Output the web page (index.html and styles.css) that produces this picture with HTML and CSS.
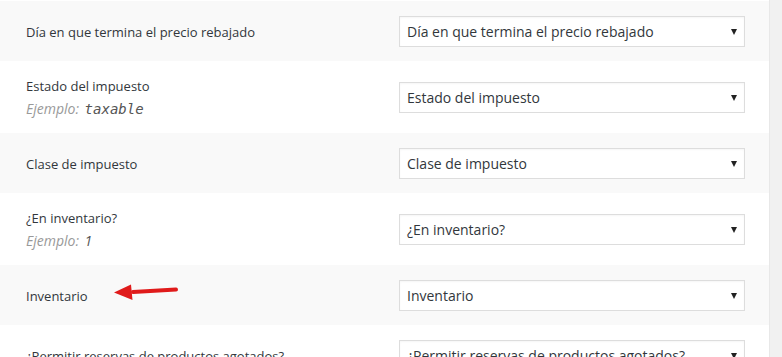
FILE: index.html
```html
<!DOCTYPE html>
<html lang="es">
<head>
    <meta charset="UTF-8">
    <meta name="viewport" content="width=device-width, initial-scale=1.0">
    <title>Importar productos - Campos</title>
    <link rel="stylesheet" href="styles.css">
</head>
<body>
    <div class="screen">
        <div class="fields">
            <div class="row alt">
                <div class="label">Día en que termina el precio rebajado</div>
                <div class="field"><div class="select">Día en que termina el precio rebajado<span class="caret"></span></div></div>
            </div>
            <div class="row">
                <div class="label">
                    Estado del impuesto
                    <div class="example">Ejemplo: <code>taxable</code></div>
                </div>
                <div class="field"><div class="select">Estado del impuesto<span class="caret"></span></div></div>
            </div>
            <div class="row alt">
                <div class="label">Clase de impuesto</div>
                <div class="field"><div class="select">Clase de impuesto<span class="caret"></span></div></div>
            </div>
            <div class="row">
                <div class="label">
                    ¿En inventario?
                    <div class="example">Ejemplo: <code class="num">1</code></div>
                </div>
                <div class="field"><div class="select">¿En inventario?<span class="caret"></span></div></div>
            </div>
            <div class="row alt">
                <div class="label">Inventario</div>
                <div class="field"><div class="select">Inventario<span class="caret"></span></div></div>
                <!-- annotation arrow -->
                <svg class="arrow" width="70" height="24" viewBox="0 0 70 24">
                    <path d="M63 6.5 L20 9" stroke="#e01b1b" stroke-width="4" stroke-linecap="round" fill="none"/>
                    <polygon points="1,9.5 18,1.5 19.5,17" fill="#e01b1b"/>
                </svg>
            </div>
            <div class="row">
                <div class="label">¿Permitir reservas de productos agotados?</div>
                <div class="field"><div class="select">¿Permitir reservas de productos agotados?<span class="caret"></span></div></div>
            </div>
        </div>
        <div class="scroll"></div>
    </div>
</body>
</html>
```
FILE: styles.css
```css
body {
    margin: 0;
    font-family: "Open Sans", "Noto Sans", sans-serif;
    color: #32373c;
    background-color: #f1f1f1;
}
.screen {
    display: flex;
    height: 357px;
    overflow: hidden;
}
.fields {
    width: 769px;
    padding-top: 1px;
    background-color: #ffffff;
}
.scroll {
    flex: 1;
    background-color: #f1f1f1;
    border-left: 1px solid #e8e8e8;
}
.row {
    position: relative;
    display: grid;
    grid-template-columns: 399px 346px;
    align-items: center;
    padding: 15px 0 14px;
}
.row.alt {
    background-color: #f9f9f9;
}
.label {
    padding-left: 26px;
    font-size: 13px;
    line-height: 20px;
}
.example {
    margin-top: 3px;
    color: #999999;
    font-style: italic;
    font-size: 14px;
}
.example code {
    font-family: "DejaVu Sans Mono", "Liberation Mono", monospace;
    font-size: 14px;
    color: #555555;
    margin-left: 2px;
}
.example code.num {
    font-family: "Open Sans", sans-serif;
}
.select {
    position: relative;
    height: 31px;
    box-sizing: border-box;
    border: 1px solid #dddddd;
    background-color: #ffffff;
    box-shadow: inset 0 1px 2px rgba(0, 0, 0, 0.04);
    padding-left: 7px;
    font-size: 14px;
    line-height: 29px;
    white-space: nowrap;
}
.caret {
    position: absolute;
    right: 7px;
    top: 12px;
    border-left: 3.5px solid transparent;
    border-right: 3.5px solid transparent;
    border-top: 6px solid #222222;
}
.arrow {
    position: absolute;
    left: 113px;
    top: 18px;
}
```
